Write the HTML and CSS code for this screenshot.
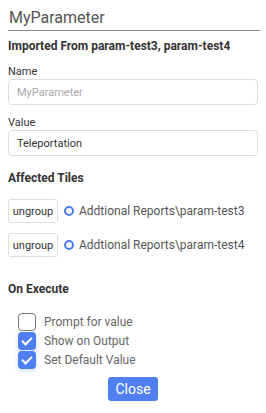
FILE: index.html
```html
<!DOCTYPE html>
<html>
<head>
  <title>Parameter</title>
  <link rel="stylesheet" href="styles.css">
</head>
<body>
  <div class="dialog">
    <h1 class="title">MyParameter</h1>

    <h3 class="section imported">Imported From param-test3, param-test4</h3>

    <label class="field-label" for="name">Name</label>
    <input class="field" type="text" id="name" placeholder="MyParameter" />

    <label class="field-label value-label" for="value">Value</label>
    <input class="field" type="text" id="value" value="Teleportation" />

    <h3 class="section tiles">Affected Tiles</h3>
    <div class="tile-list">
      <div class="tile">
        <button class="ungroup">ungroup</button>
        <span class="dot"></span>
        <span class="tile-name">Addtional Reports\param-test3</span>
      </div>
      <div class="tile">
        <button class="ungroup">ungroup</button>
        <span class="dot"></span>
        <span class="tile-name">Addtional Reports\param-test4</span>
      </div>
    </div>

    <h3 class="section execute">On Execute</h3>
    <div class="options">
      <label class="option"><span class="box"></span>Prompt for value</label>
      <label class="option"><span class="box checked"></span>Show on Output</label>
      <label class="option"><span class="box checked"></span>Set Default Value</label>
    </div>

    <div class="actions">
      <button class="close">Close</button>
    </div>
  </div>
</body>
</html>
```
FILE: styles.css
```css
body {
  font-family: Roboto, "Liberation Sans", Arial, sans-serif;
  background-color: white;
  margin: 0;
  padding: 0;
  color: #333;
}

.dialog {
  padding: 0 8px;
  display: flex;
  flex-direction: column;
}

.title {
  margin: 0 -2px 0 0;
  padding: 8px 0 2px 1px;
  font-size: 16px;
  line-height: 20px;
  font-weight: normal;
  color: #555;
  border-bottom: 1px solid #8a8a8a;
}

.section {
  margin: 0;
  font-size: 12px;
  line-height: 14px;
  font-weight: bold;
  color: #333;
}

.imported {
  margin-top: 8px;
}

.field-label {
  margin-top: 12px;
  font-size: 11px;
  line-height: 13px;
  color: #333;
}

.value-label {
  margin-top: 11px;
}

.field {
  margin-top: 1px;
  height: 26px;
  box-sizing: border-box;
  padding: 0 8px;
  border: 1px solid #ddd;
  border-radius: 4px;
  font-family: inherit;
  font-size: 11px;
  color: #333;
  outline: none;
}

.field::placeholder {
  color: #aaa;
}

.tiles {
  margin-top: 15px;
}

.tile-list {
  margin-top: 14px;
  display: flex;
  flex-direction: column;
  gap: 10px;
}

.tile {
  display: flex;
  align-items: center;
}

.ungroup {
  width: 50px;
  height: 24px;
  padding: 0;
  background-color: white;
  border: 1px solid #ddd;
  border-radius: 3px;
  font-family: inherit;
  font-size: 11px;
  color: #333;
}

.dot {
  width: 6px;
  height: 6px;
  margin-left: 6px;
  border: 2px solid #4a7de8;
  border-radius: 50%;
}

.tile-name {
  margin-left: 5px;
  font-size: 12px;
  color: #555;
  white-space: nowrap;
}

.execute {
  margin-top: 25px;
}

.options {
  margin-top: 17px;
  padding-left: 10px;
  display: flex;
  flex-direction: column;
  gap: 1px;
}

.option {
  display: flex;
  align-items: center;
  height: 18px;
  font-size: 12px;
  color: #666;
}

.box {
  width: 18px;
  height: 18px;
  box-sizing: border-box;
  margin-right: 8px;
  border: 1.5px solid #777;
  border-radius: 4px;
  background-color: white;
  position: relative;
}

.box.checked {
  border: none;
  background-color: #4f7ef2;
  box-shadow: 0 2px 5px rgba(79, 126, 242, 0.25);
}

.box.checked::after {
  content: "";
  position: absolute;
  left: 5px;
  top: 3px;
  width: 8px;
  height: 4px;
  border-left: 2px solid white;
  border-bottom: 2px solid white;
  transform: translate(-1px, 2px) rotate(-45deg);
}

.actions {
  margin-top: 8px;
  display: flex;
  justify-content: center;
}

.close {
  width: 50px;
  height: 24px;
  padding: 0;
  background-color: #5080f0;
  color: white;
  border: none;
  border-radius: 3px;
  font-family: inherit;
  font-size: 14px;
}
```
